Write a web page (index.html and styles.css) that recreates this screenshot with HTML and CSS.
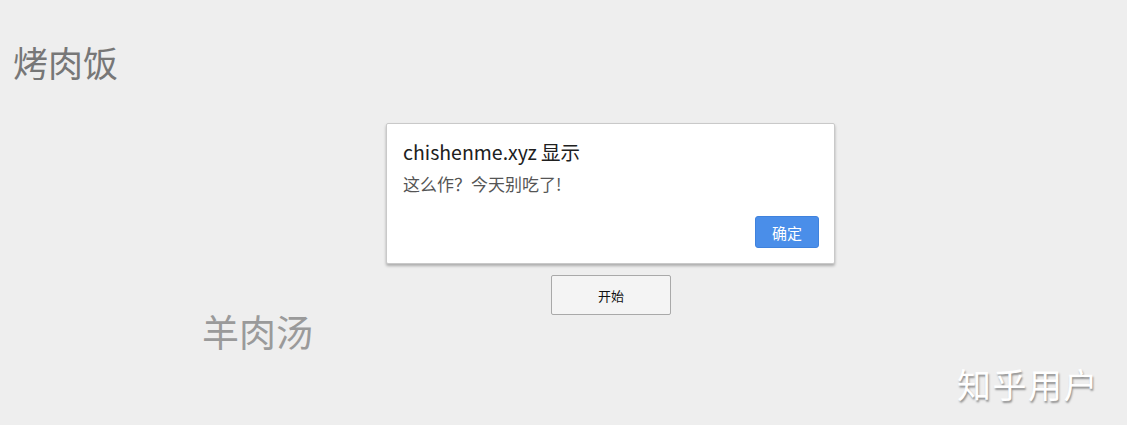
FILE: index.html
```html
<!DOCTYPE html>
<html lang="zh-CN">
<head>
<meta charset="utf-8">
<title>吃什么</title>
<link rel="stylesheet" href="styles.css">
</head>
<body>
<main class="page">
  <h1 class="dish dish-top">烤肉饭</h1>
  <div class="actions">
    <button class="start-btn" type="button">开始</button>
  </div>
  <p class="dish dish-bottom">羊肉汤</p>
</main>

<div class="alert" role="alertdialog">
  <div class="alert-title">chishenme.xyz 显示</div>
  <div class="alert-msg">这么作？今天别吃了!</div>
  <div class="alert-footer">
    <button class="ok-btn" type="button">确定</button>
  </div>
</div>

<div class="watermark">知乎用户</div>
</body>
</html>
```

FILE: styles.css
```css
html, body {
  margin: 0;
  padding: 0;
  background: #eeeeee;
  font-family: "Noto Sans CJK SC", "Noto Sans", sans-serif;
}

.page {
  display: flex;
  flex-direction: column;
  align-items: flex-start;
  height: 425px;
  overflow: hidden;
}

.dish {
  margin: 0;
  font-weight: normal;
  line-height: 36px;
}

.dish-top {
  font-size: 35px;
  color: #777777;
  margin-top: 44px;
  margin-left: 13px;
}

.actions {
  margin-top: 195px;
  margin-left: 551px;
}

.start-btn {
  width: 120px;
  height: 40px;
  background: #f4f4f4;
  border: 1px solid #a9a9a9;
  border-radius: 2px;
  font-family: "Noto Sans CJK SC", sans-serif;
  font-size: 13px;
  color: #111;
  padding: 0;
}

.dish-bottom {
  font-size: 37px;
  line-height: 36px;
  color: #9a9a9a;
  margin-top: -2px;
  margin-left: 202px;
}

.alert {
  position: absolute;
  left: 386px;
  top: 123px;
  width: 449px;
  height: 141px;
  box-sizing: border-box;
  background: #ffffff;
  border: 1px solid #c9c9c9;
  border-radius: 2px;
  box-shadow: 0 2px 3px rgba(0, 0, 0, 0.28);
  padding: 15px 15px 15px 16px;
  display: flex;
  flex-direction: column;
}

.alert-title {
  font-size: 19.5px;
  line-height: 26px;
  color: #202020;
}

.alert-msg {
  margin-top: 9px;
  font-size: 17px;
  line-height: 20px;
  color: #555555;
}

.alert-footer {
  margin-top: auto;
  display: flex;
  justify-content: flex-end;
}

.ok-btn {
  width: 64px;
  height: 32px;
  background: #4a8ee9;
  border: 1px solid #3f82dd;
  border-radius: 3px;
  color: #ffffff;
  font-family: "Noto Sans CJK SC", sans-serif;
  font-size: 15px;
  padding: 0;
}

.watermark {
  position: absolute;
  left: 957px;
  top: 364px;
  font-size: 34px;
  line-height: 40px;
  color: #ffffff;
  text-shadow: 1px 2px 2px rgba(0, 0, 0, 0.4);
  letter-spacing: 1.5px;
}
```
